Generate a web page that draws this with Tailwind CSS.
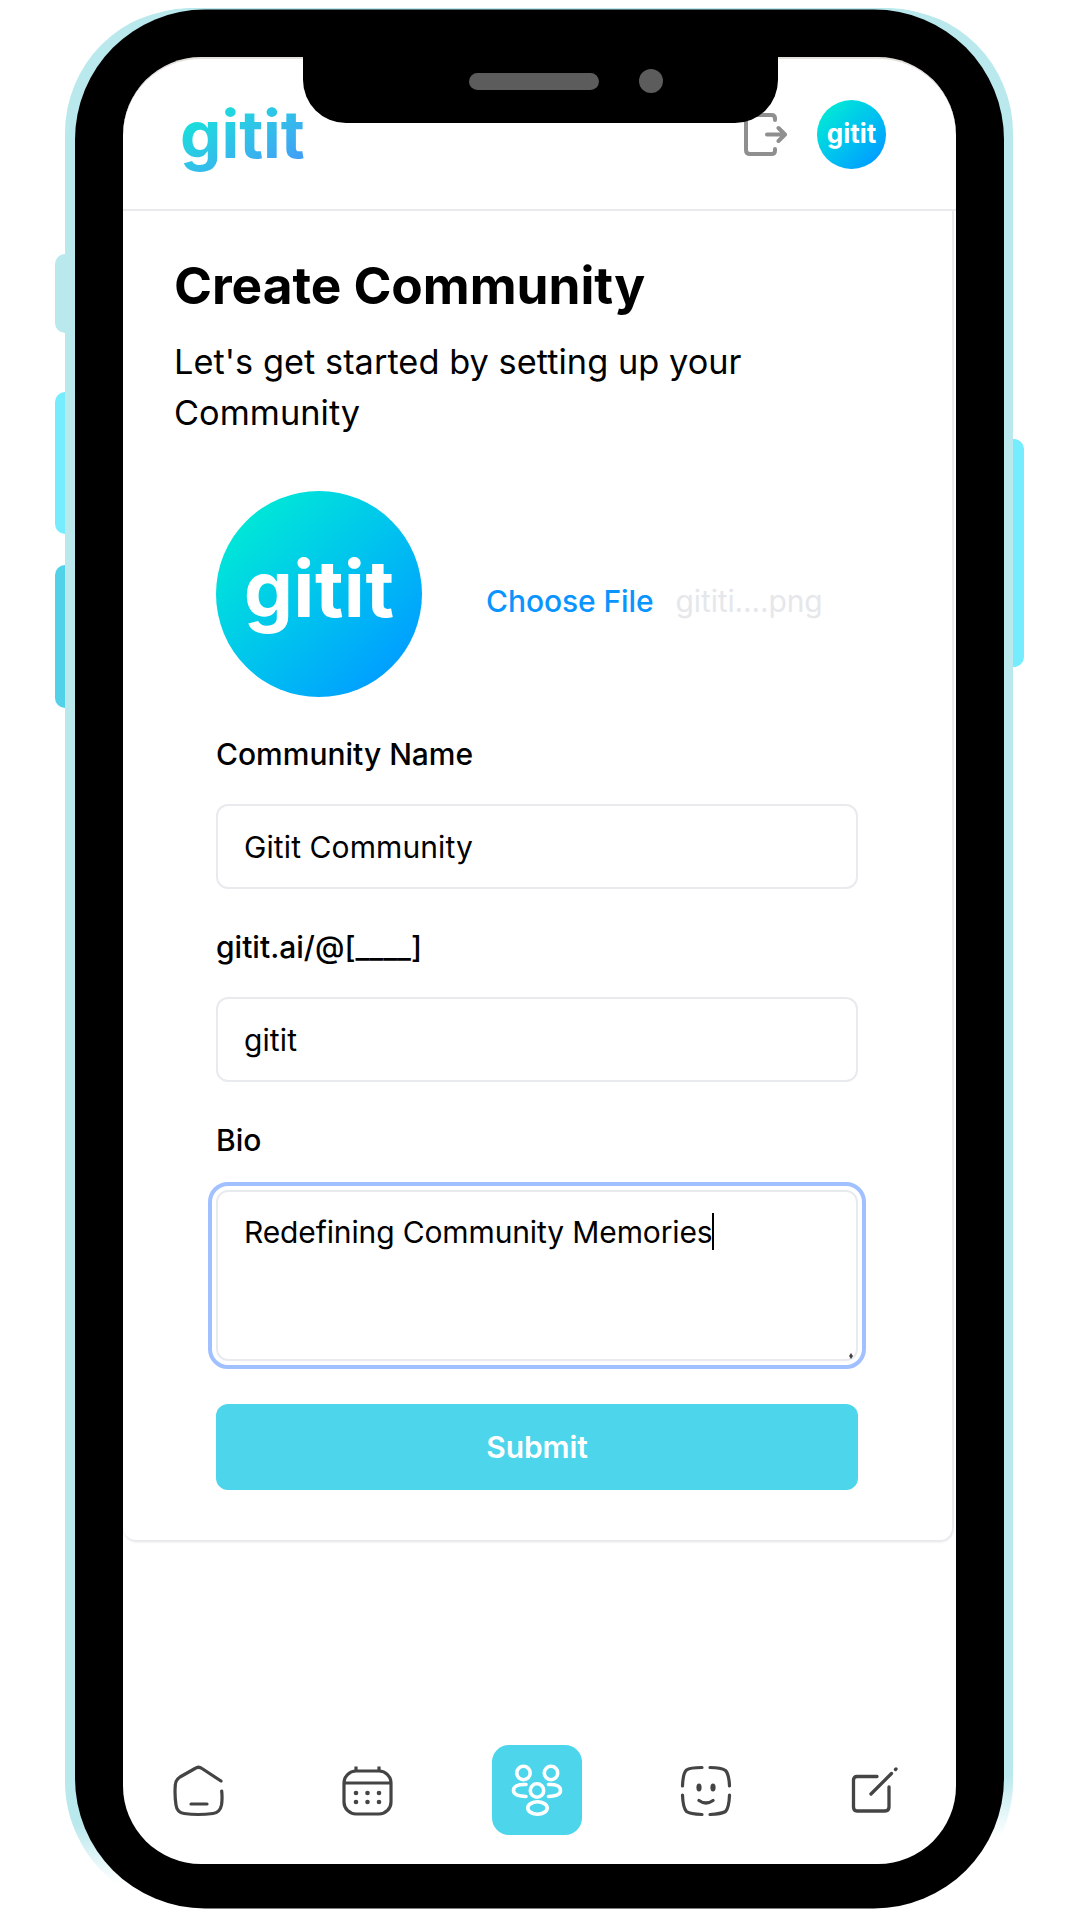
<!DOCTYPE html>
<html lang="en">
<head>
<meta charset="utf-8">
<title>Create Community</title>
<script src="https://cdn.jsdelivr.net/npm/@tailwindcss/browser@4"></script>
</head>
<body class="relative h-[1920px] w-[1080px] overflow-hidden bg-white font-['Inter',sans-serif] text-black">
  <!-- side buttons -->
  <div class="absolute left-[55px] top-[254px] h-[79px] w-5 rounded-l-[10px] bg-[#b9e8ed]"></div>
  <div class="absolute left-[55px] top-[392px] h-[142px] w-5 rounded-l-[10px] bg-[#76edff]"></div>
  <div class="absolute left-[55px] top-[565px] h-[143px] w-5 rounded-l-[10px] bg-[#52d2e8]"></div>
  <div class="absolute left-[1004px] top-[439px] h-[228px] w-5 rounded-r-[10px] bg-[#76edff]"></div>
  <!-- phone shell -->
  <svg class="absolute inset-0" width="1080" height="1920" viewBox="0 0 1080 1920" fill="none">
    <defs>
      <linearGradient id="rim" x1="0" y1="1828" x2="3.3" y2="1890" gradientUnits="userSpaceOnUse">
        <stop offset="0" stop-color="#b9e8ed"/><stop offset="1" stop-color="#b9e8ed" stop-opacity="0"/>
      </linearGradient>
    </defs>
    <path d="M65 133A125 125 0 0 1 190 8H888A125 125 0 0 1 1013 133V1782C1013 1840 970 1895 920 1900H158C108 1895 65 1840 65 1782Z" fill="url(#rim)"/>
    <path d="M139 19Q165 9 186 8H150L136 14ZM939 19Q913 9 892 8H916L942 14Z" fill="#fff"/>
    <rect x="75" y="9.5" width="929" height="1899" rx="130" fill="#000"/>
  </svg>

  <div class="relative ml-[123px] mt-[57px] flex h-[1807px] w-[833px] flex-col overflow-hidden rounded-[78px] border-t-2 border-[#e4e1dc] bg-white">
    <header class="flex h-[152px] w-full shrink-0 items-center justify-between border-b-2 border-[#e8eaee] pl-[57px] pr-[70px] pt-px">
      <div class="bg-linear-to-br from-[#0ee3d8] from-15% to-[#429df6] to-90% bg-clip-text text-[65.500px] font-bold leading-[76px] text-transparent">gitit</div>
      <div class="flex items-center gap-[29px]">
        <svg width="44" height="44" viewBox="0 0 44 44" fill="none" stroke="#8f8f8f" stroke-width="4" stroke-linecap="round" stroke-linejoin="round"><path d="M31 7V5.500Q31 2 27.500 2H6Q2 2 2 6V37Q2 41 6 41H27.500Q31 41 31 37.500V36M23 21.500H41M34.500 15L41 21.500L34.500 28"/></svg>
        <div class="flex size-[69px] items-center justify-center rounded-full bg-linear-to-br from-[#00e8d6] from-12% to-[#009fff] to-86% pb-[3px] text-[26px] font-bold text-white">gitit</div>
      </div>
    </header>

    <main class="flex h-[1331px] w-[831px] shrink-0 flex-col rounded-b-[14px] border-b-2 border-r-2 border-[#e8eaee] pl-[51px] pr-[50px] pt-[47px] shadow-xs">
      <h1 class="text-[51.4px] font-bold leading-[54px] tracking-[-0.05px]">Create Community</h1>
      <p class="mt-[24px] text-[34.3px] leading-[51.4px] tracking-[0.05px]">Let's get started by setting up your Community</p>

      <form class="flex flex-col pl-[42px] pr-[44px] pt-[52px]">
        <div class="flex items-center">
          <div class="flex size-[206px] shrink-0 items-center justify-center rounded-full bg-linear-to-br from-[#00e8d6] from-12% to-[#009fff] to-86% pb-2.5 text-[78px] font-bold tracking-[0.4px] text-white">gitit</div>
          <div class="mt-4 flex items-center gap-[22px] pl-[64px] text-[30px]">
            <span class="font-medium tracking-[-0.08px] text-[#0a94ff]">Choose File</span>
            <span class="tracking-[-0.15px] text-gray-200">gititi....png</span>
          </div>
        </div>
        <label class="mt-[42px] text-[30px] font-medium leading-[30px]">Community Name</label>
        <div class="mt-[35px] flex h-[85px] items-center rounded-[12px] border-2 border-[#e8eaee] px-[26px] pt-[3px] text-[30px] tracking-[0.1px]">Gitit Community</div>
        <label class="mt-[43px] text-[30px] font-medium leading-[30px]">gitit.ai/@[____]</label>
        <div class="mt-[35px] flex h-[85px] items-center rounded-[12px] border-2 border-[#e8eaee] px-[26px] pt-[3px] text-[30px] tracking-[0.1px]">gitit</div>
        <label class="mt-[43px] text-[30px] font-medium leading-[30px]">Bio</label>
        <div class="relative mt-[35px] flex h-[171px] items-start rounded-[12px] border-2 border-[#e8eaee] px-[26px] pt-[20px] text-[30px] leading-[40px] tracking-[-0.13px] outline-4 outline-offset-[4px] outline-[#a0c0ff]">Redefining Community Memories<span class="mt-px h-[37px] w-[2px] bg-black"></span>
          <svg class="absolute bottom-0 right-0.5" width="6" height="6" viewBox="0 0 6 6"><path d="M3 0L5 3L3 6L1 3Z" fill="#444"/></svg>
        </div>
        <button type="button" class="mt-[43px] h-[86px] rounded-[12px] bg-[#4cd5eb] pt-0.5 text-[30px] font-semibold tracking-[-0.1px] text-white">Submit</button>
      </form>
    </main>

    <nav class="-ml-[9px] mt-auto mb-[29px] grid h-[90px] w-[845px] shrink-0 grid-cols-5 items-center justify-items-center text-[#444]">
      <svg class="mt-0.5" width="52" height="52" viewBox="0 0 52 52" fill="none" stroke="currentColor" stroke-width="3.200" stroke-linecap="round" stroke-linejoin="round"><path d="M48 16L29 3.500Q25.500 1 22 3.500L7 12Q2.500 15 2.300 20Q1.500 30 3 40Q4 47.500 11 48.500Q25 50.500 40 48.500Q47 47.500 48.500 40Q49.500 34 48.700 26M18 39H34"/></svg>
      <svg class="mt-0.5" width="52" height="52" viewBox="0 0 52 52" fill="none" stroke="currentColor" stroke-width="3.200"><rect x="2" y="6" width="47" height="43" rx="12"/><path d="M2 18H49M14 1.500V6M37 1.500V6"/><g fill="currentColor" stroke="none"><circle cx="14" cy="28" r="2.300"/><circle cx="25.500" cy="28" r="2.300"/><circle cx="37" cy="28" r="2.300"/><circle cx="14" cy="37" r="2.300"/><circle cx="25.500" cy="37" r="2.300"/><circle cx="37" cy="37" r="2.300"/></g></svg>
      <div class="flex size-[90px] items-center justify-center rounded-[17px] bg-[#4cd5eb] text-white">
        <svg width="52" height="52" viewBox="0 0 52 52" fill="none" stroke="currentColor" stroke-width="3.600" stroke-linecap="round"><circle cx="12.500" cy="9" r="6.700"/><circle cx="40" cy="9" r="6.700"/><circle cx="26" cy="26.500" r="6.700"/><ellipse cx="26.500" cy="44" rx="9.700" ry="6.200"/><path d="M15 20.500Q2.500 20 2.500 26.500Q2.500 32 15 32.500M37.500 20.500Q49.500 20 49.500 26.500Q49.500 32 37.500 32.500"/></svg>
      </div>
      <svg class="mt-0.5" width="52" height="52" viewBox="0 0 52 52" fill="none" stroke="currentColor" stroke-width="3.200" stroke-linecap="round"><path d="M22 2.500Q10 2.500 6.500 5Q3 8 2.500 21M30 2.500Q41 2.500 45.500 5.500Q49 9 49.500 21M2.500 30Q3 43 6.500 46.500Q10 49 22 49.500M49.500 30Q49 43 45.500 46.500Q41 49 30 49.500M19 35.500Q26 40.500 33 35.500"/><g fill="currentColor" stroke="none"><ellipse cx="19" cy="22.500" rx="2.600" ry="4"/><ellipse cx="33" cy="22.500" rx="2.600" ry="4"/></g></svg>
      <svg class="mt-0.5" width="47" height="52" viewBox="0 0 47 52" fill="none" stroke="currentColor" stroke-width="3.300" stroke-linecap="round" stroke-linejoin="round"><path d="M26 11.500H6Q2.500 11.500 2.500 15V42Q2.500 46 6 46H34Q38 46 38 42V22M20 29L40.500 8.500M44.500 4.500L45 4"/></svg>
    </nav>
  </div>

  <!-- notch -->
  <div class="absolute left-[303px] top-[50px] h-[72.500px] w-[475px] rounded-b-[43px] bg-black"></div>
  <div class="absolute left-[469px] top-[73px] h-[17px] w-[130px] rounded-full bg-[#5c5c5c]"></div>
  <div class="absolute left-[639px] top-[69px] size-6 rounded-full bg-[#5c5c5c]"></div>
</body>
</html>
